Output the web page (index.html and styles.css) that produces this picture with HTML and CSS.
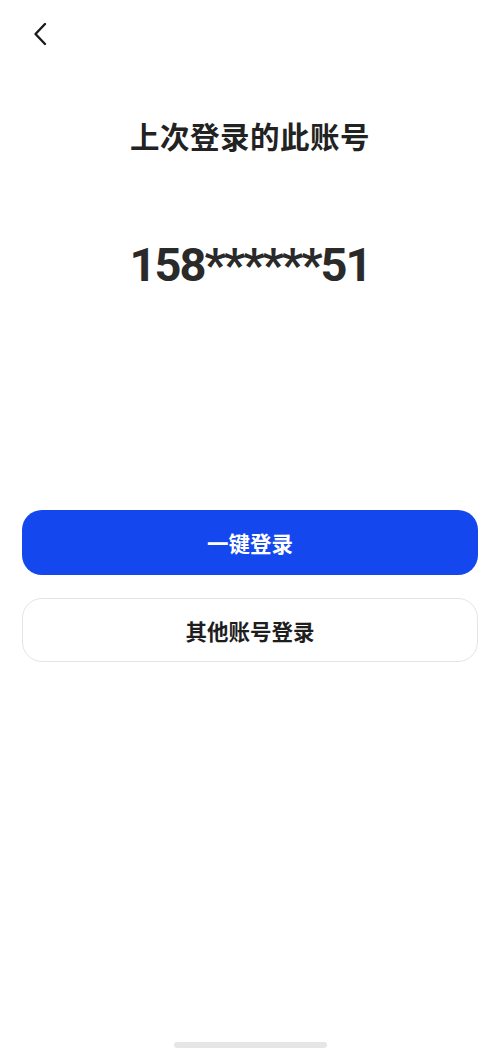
FILE: index.html
```html
<!DOCTYPE html>
<html lang="zh">
<head>
<meta charset="utf-8">
<link rel="stylesheet" href="styles.css">
</head>
<body>
<div class="page">
  <div class="topbar">
    <svg class="back" width="14" height="24" viewBox="0 0 14 24"><path d="M12 2 L2.5 12 L12 22" fill="none" stroke="#1a1a1a" stroke-width="2.4" stroke-linecap="round" stroke-linejoin="round"/></svg>
  </div>
  <h1 class="title">上次登录的此账号</h1>
  <div class="phone">158******51</div>
  <div class="actions">
    <button class="btn btn-primary">一键登录</button>
    <button class="btn btn-secondary">其他账号登录</button>
  </div>
  <div class="spacer"></div>
  <div class="home-indicator"></div>
</div>
</body>
</html>
```
FILE: styles.css
```css
html, body {
  margin: 0;
  padding: 0;
  background: #ffffff;
}
body {
  font-family: "Noto Sans CJK SC", "Noto Sans", sans-serif;
  color: #222222;
}
.page {
  width: 500px;
  height: 1057px;
  display: flex;
  flex-direction: column;
  box-sizing: border-box;
}
.topbar {
  height: 68px;
  display: flex;
  align-items: center;
  padding-left: 33px;
  box-sizing: border-box;
}
.back {
  display: block;
}
.title {
  margin: 45px 0 0;
  text-align: center;
  font-size: 29.5px;
  font-weight: 700;
  line-height: 44px;
  color: #222222;
  letter-spacing: 0.5px;
}
.phone {
  margin-top: 80px;
  text-align: center;
  font-family: Roboto, "Liberation Sans", sans-serif;
  font-size: 47px;
  font-weight: 700;
  letter-spacing: -2px;
  line-height: 56px;
  color: #2a2a2a;
}
.actions {
  margin-top: 217px;
  padding: 0 22px;
  display: flex;
  flex-direction: column;
  gap: 23px;
}
.btn {
  height: 65px;
  border-radius: 20px;
  font-family: "Noto Sans CJK SC", sans-serif;
  font-size: 21.5px;
  font-weight: 600;
  cursor: pointer;
}
.btn-primary {
  background: #1447ee;
  color: #ffffff;
  border: none;
}
.btn-secondary {
  background: #ffffff;
  color: #1e1e1e;
  border: 1px solid #e4e4e4;
  height: 64px;
}
.spacer {
  flex: 1;
}
.home-indicator {
  width: 153px;
  height: 6px;
  border-radius: 3px;
  background: #e6e6e6;
  margin: 0 auto 9px;
}
```
